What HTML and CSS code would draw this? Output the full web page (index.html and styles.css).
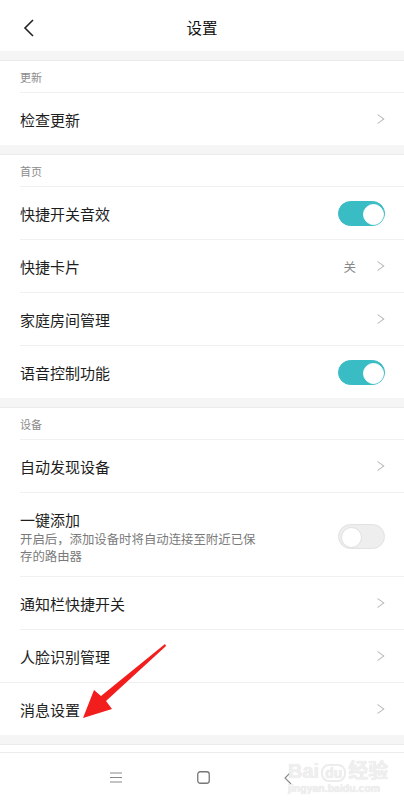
FILE: index.html
```html
<!DOCTYPE html>
<html>
  <head>
    <meta charset="UTF-8">
    <meta name="viewport" content="width=404, user-scalable=no">
    <title>设置</title>
    <link rel="stylesheet" href="styles.css">
  </head>
  <body>
    <div class="screen">
      <div class="topbar">
        <svg class="back" width="12" height="20" viewBox="0 0 12 20"><path d="M10 2 L2 10 L10 18" fill="none" stroke="#222" stroke-width="1.6"/></svg>
        <div class="title">设置</div>
      </div>

      <div class="gap"></div>
      <div class="group">
        <div class="label">更新</div>
        <div class="row"><span class="name">检查更新</span><span class="chev"></span></div>
      </div>

      <div class="gap"></div>
      <div class="group">
        <div class="label">首页</div>
        <div class="row"><span class="name">快捷开关音效</span><span class="switch on"></span></div>
        <div class="row"><span class="name">快捷卡片</span><span class="value">关</span><span class="chev"></span></div>
        <div class="row"><span class="name">家庭房间管理</span><span class="chev"></span></div>
        <div class="row"><span class="name">语音控制功能</span><span class="switch on"></span></div>
      </div>

      <div class="gap"></div>
      <div class="group">
        <div class="label">设备</div>
        <div class="row"><span class="name">自动发现设备</span><span class="chev"></span></div>
        <div class="row tall">
          <div class="text">
            <div class="name">一键添加</div>
            <div class="desc">开启后，添加设备时将自动连接至附近已保存的路由器</div>
          </div>
          <span class="switch"></span>
        </div>
        <div class="row"><span class="name">通知栏快捷开关</span><span class="chev"></span></div>
        <div class="row full"><span class="name">人脸识别管理</span><span class="chev"></span></div>
        <div class="row"><span class="name">消息设置</span><span class="chev"></span></div>
      </div>

      <div class="gap"></div>
      <div class="spacer"></div>

      <div class="navbar">
        <svg width="12" height="11" viewBox="0 0 12 11"><path d="M0 1H12M0 5.5H12M0 10H12" stroke="#888" stroke-width="1"/></svg>
        <svg width="13" height="13" viewBox="0 0 13 13"><rect x="0.75" y="0.75" width="11.5" height="11.5" rx="2.5" fill="none" stroke="#777" stroke-width="1.3"/></svg>
        <svg width="8" height="14" viewBox="0 0 8 14"><path d="M7 1L1 7L7 13" fill="none" stroke="#888" stroke-width="1.1"/></svg>
      </div>

      <div class="watermark">
        <div class="wm-big">Bai<span class="wm-du">du</span>经验</div>
        <div class="wm-small">jingyan.baidu.com</div>
      </div>

      <svg class="arrow" width="90" height="80" viewBox="0 0 90 80">
        <polygon points="83,1 84,3 24,58 30,66 1,75 12,47 19,53" fill="#f21d1d"/>
      </svg>
    </div>
  </body>
</html>
```

FILE: styles.css
```css
* {
  box-sizing: border-box;
}
body {
  margin: 0;
  background: #fff;
  font-family: "Noto Sans CJK SC", "Noto Sans", sans-serif;
  color: #222;
}
.screen {
  position: relative;
  width: 404px;
  height: 801px;
  overflow: hidden;
  background: #fff;
}
.topbar {
  height: 51px;
  display: flex;
  align-items: center;
  justify-content: center;
  position: relative;
}
.back {
  position: absolute;
  left: 23px;
  top: 18px;
}
.title {
  font-size: 15.5px;
  color: #111;
  margin-top: 2px;
}
.gap {
  height: 10px;
  background: #f5f5f5;
  border-bottom: 1px solid #ebebeb;
}
.label {
  height: 32px;
  margin-left: 20px;
  padding-top: 8px;
  font-size: 11px;
  color: #8c8c8c;
  border-bottom: 1px solid #f0f0f0;
}
.row {
  height: 53px;
  margin-left: 20px;
  padding-right: 19px;
  display: flex;
  align-items: center;
  border-bottom: 1px solid #f0f0f0;
}
.row:last-child {
  border-bottom: none;
  height: 52px;
}
.row.full {
  margin-left: 0;
  padding-left: 20px;
}
.row.tall {
  height: 84px;
  padding-top: 4px;
}
.name {
  flex: 1;
  font-size: 15px;
  color: #1e1e1e;
}
.text {
  flex: 1;
}
.desc {
  width: 245px;
  font-size: 12.4px;
  line-height: 17px;
  color: #7a7a7a;
  margin-top: 1px;
}
.value {
  font-size: 12.5px;
  color: #888;
  margin-right: 18px;
}
.chev {
  width: 8px;
  height: 8px;
  border-top: 1px solid #b5b5b5;
  border-right: 1px solid #b5b5b5;
  transform: rotate(45deg) skew(-8deg, -8deg);
  margin-right: 3px;
}
.switch {
  width: 47px;
  height: 25px;
  border-radius: 13px;
  background: #eeeeee;
  border: 1px solid #e2e2e2;
  position: relative;
}
.switch::after {
  content: "";
  position: absolute;
  top: 2px;
  left: 2px;
  width: 19px;
  height: 19px;
  border-radius: 50%;
  background: #fff;
  border: 1px solid #e0e0e0;
}
.switch.on {
  background: #39bcc4;
  border-color: #39bcc4;
}
.switch.on::after {
  left: 24px;
  border-color: #fff;
}
.spacer {
  height: 7px;
}
.navbar {
  height: 50px;
  border-top: 1px solid #ececec;
  display: flex;
  align-items: center;
  justify-content: space-between;
  padding: 0 112px 0 110px;
}
.watermark {
  position: absolute;
  left: 288px;
  top: 760px;
  color: #efefef;
  text-shadow: 0 0 1px #dcdcdc;
}
.wm-big {
  font-family: "Liberation Sans", "Noto Sans CJK SC", sans-serif;
  font-size: 20px;
  font-weight: bold;
  line-height: 22px;
}
.wm-du {
  display: inline-block;
  border: 2px solid #ececec;
  border-radius: 8px;
  font-size: 14px;
  line-height: 14px;
  padding: 0 2px;
  margin: 0 2px;
}
.wm-small {
  font-family: "Liberation Sans", sans-serif;
  font-size: 10.5px;
  font-weight: bold;
  line-height: 12px;
}
.arrow {
  position: absolute;
  left: 82px;
  top: 643px;
}
```
